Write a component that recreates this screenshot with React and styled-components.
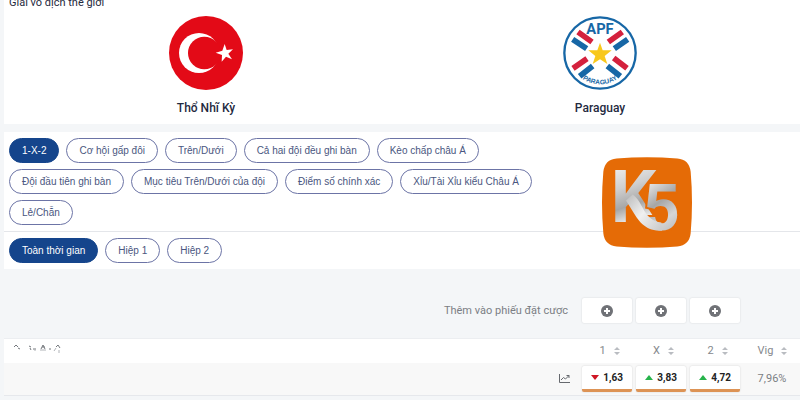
import { useState } from 'react';
import styled, { createGlobalStyle } from 'styled-components';

const GlobalStyle = createGlobalStyle`
  * {
    box-sizing: border-box;
  }

  body {
    margin: 0;
    overflow: hidden;
    background: #f4f6f8;
    color: #1f2a40;
    font-family: Roboto, 'Liberation Sans', sans-serif;
    font-size: 11px;
  }

  button {
    font: inherit;
    color: inherit;
    cursor: pointer;
  }
`;

const Page = styled.main`
  padding-left: 4px;
`;

const MatchCard = styled.section`
  margin-top: -6px;
  background: #ffffff;
`;

const League = styled.div`
  padding: 0 5px;
  line-height: 18px;
`;

const Teams = styled.div`
  display: grid;
  grid-template-columns: 1fr 1fr;
  padding: 4px 3px 8px 5px;
`;

const Team = styled.div`
  display: flex;
  flex-direction: column;
  align-items: center;
  gap: 10px;
`;

const Badge = styled.svg`
  width: 74px;
  height: 74px;
`;

const TeamName = styled.h2`
  margin: 0;
  font-size: 12px;
  line-height: 16px;
  font-weight: 500;
`;

const Markets = styled.section`
  position: relative;
  margin-top: 8px;
  background: #ffffff;
`;

const PillRow = styled.div`
  display: flex;
  flex-wrap: wrap;
  gap: 6px 7px;
  padding: 6px 5px;
  border-top: ${(props) => (props.$divided ? '1px solid #e4e6ea' : 'none')};
`;

const MarketPills = styled(PillRow)`
  width: 72%;
`;

const Pill = styled.button`
  height: 25px;
  padding: 0 12px;
  border: 1px solid ${(props) => (props.$active ? '#15458c' : '#6c74a6')};
  border-radius: 13px;
  background: ${(props) => (props.$active ? '#15458c' : '#ffffff')};
  color: ${(props) => (props.$active ? '#ffffff' : '#4a5680')};
  font-family: 'Liberation Sans', Arial, sans-serif;
  font-size: 10px;
  white-space: nowrap;
`;

const BrandMark = styled.svg`
  position: absolute;
  top: 25px;
  right: 108px;
  width: 90px;
  height: 91px;
`;

const BetSlip = styled.section`
  display: flex;
  justify-content: flex-end;
  align-items: center;
  gap: 4px;
  padding: 29px 60px 15px 0;
`;

const SlipLabel = styled.span`
  margin-right: 10px;
  color: #7b7e84;
  font-size: 11px;
`;

const SlipButton = styled.button`
  display: flex;
  align-items: center;
  justify-content: center;
  width: 50px;
  height: 25px;
  padding: 0;
  border: 0;
  border-radius: 2px;
  background: #ffffff;
  box-shadow: 0 0 2px rgba(0, 0, 0, 0.14);
`;

const OddsTable = styled.table`
  width: 100%;
  table-layout: fixed;
  border-collapse: collapse;
  border-bottom: 1px solid #e6e8ec;
  background: #f8f8f8;
`;

const HeadCell = styled.th`
  width: ${(props) => props.$width};
  height: 24px;
  padding: 0 5px 0 ${(props) => (props.$first ? '10px' : '6px')};
  border-top: 1px solid #eceef1;
  background: #ffffff;
  color: #85888d;
  font-weight: 400;
  text-align: ${(props) => (props.$first ? 'left' : 'center')};
`;

const SortButton = styled.button`
  display: inline-flex;
  align-items: center;
  gap: 8px;
  padding: 0;
  border: 0;
  background: none;
`;

const Cell = styled.td`
  height: 33px;
  padding: 0;
  color: #7b7e84;
  text-align: ${(props) => props.$align || 'left'};
`;

const ChartButton = styled.button`
  padding: 0;
  margin-right: 12px;
  border: 0;
  background: none;
  vertical-align: middle;
`;

const OddButton = styled.button`
  display: flex;
  align-items: center;
  justify-content: space-between;
  width: 50px;
  height: 26px;
  padding: 0 9px;
  border: 0;
  border-bottom: 3px solid #dd9355;
  border-radius: 2px;
  background: #ffffff;
  box-shadow: 0 0 2px rgba(0, 0, 0, 0.16);
  color: #222222;
  font-size: 10px;
  font-weight: 700;
`;

const markets = [
  '1-X-2',
  'Cơ hội gấp đôi',
  'Trên/Dưới',
  'Cả hai đội đều ghi bàn',
  'Kèo chấp châu Á',
  'Đội đầu tiên ghi bàn',
  'Mục tiêu Trên/Dưới của đội',
  'Điểm số chính xác',
  'Xỉu/Tài Xỉu kiểu Châu Á',
  'Lẻ/Chẵn',
];

const periods = ['Toàn thời gian', 'Hiệp 1', 'Hiệp 2'];

const odds = [
  { outcome: '1', value: '1,63', up: false },
  { outcome: 'X', value: '3,83', up: true },
  { outcome: '2', value: '4,72', up: true },
];

function TurkeyFlag() {
  return (
    <Badge viewBox="0 0 222 222" aria-hidden="true">
      <circle cx="111" cy="111" r="111" fill="#e30a17" />
      <circle cx="90" cy="111" r="60" fill="#ffffff" />
      <circle cx="106" cy="111" r="49" fill="#e30a17" />
      <path
        d="M167 84l6 18 19-2-14 13 11 17-18-8-13 15 1-20-19-7 20-6z"
        fill="#ffffff"
      />
    </Badge>
  );
}

function ParaguayBadge() {
  return (
    <Badge viewBox="0 0 222 222" aria-hidden="true">
      <circle cx="111" cy="111" r="107" fill="#ffffff" stroke="#1767a6" strokeWidth="7" />
      <g strokeWidth="17">
        <path d="M45 48l42 30M178 48l-42 30M30 157l42-29M192 157l-40-31" stroke="#d4213d" />
        <path d="M29 70l42 28M194 70l-40 28M50 181l39-31M172 181l-39-31" stroke="#1767a6" />
      </g>
      <path
        d="M111 80l8 23h27l-21 17 8 24-22-14-22 14 8-24-21-17h27z"
        fill="#f8c81c"
      />
      <text
        x="111"
        y="55"
        textAnchor="middle"
        fontFamily="'Liberation Sans Narrow', Roboto, sans-serif"
        fontWeight="700"
        fontSize="44"
        fill="#1767a6"
      >
        APF
      </text>
      <path id="badge-arc" d="M48 180a92 92 0 0 0 126 0" fill="none" />
      <text
        fontFamily="'Liberation Sans Narrow', 'Liberation Sans', sans-serif"
        fontWeight="700"
        fontSize="20"
        fill="#1767a6"
        textAnchor="middle"
      >
        <textPath href="#badge-arc" startOffset="50%">PARAGUAY</textPath>
      </text>
    </Badge>
  );
}

function Brand() {
  return (
    <BrandMark viewBox="0 0 270 272" role="img" aria-label="K5">
      <defs>
        <linearGradient id="steel" gradientUnits="userSpaceOnUse" x1="38" y1="40" x2="90" y2="195">
          <stop offset="0" stopColor="#e9e9e9" />
          <stop offset="0.35" stopColor="#cfcfcf" />
          <stop offset="0.7" stopColor="#a6a6a6" />
          <stop offset="1" stopColor="#efefef" />
        </linearGradient>
        <linearGradient id="five" gradientUnits="userSpaceOnUse" x1="128" y1="80" x2="232" y2="220">
          <stop offset="0" stopColor="#ededed" />
          <stop offset="0.4" stopColor="#a6a6a6" />
          <stop offset="0.7" stopColor="#d6d6d6" />
          <stop offset="1" stopColor="#b8b8b8" />
        </linearGradient>
        <linearGradient id="ribbon" gradientUnits="userSpaceOnUse" x1="70" y1="120" x2="180" y2="210">
          <stop offset="0" stopColor="#bdbdbd" />
          <stop offset="0.5" stopColor="#f0f0f0" />
          <stop offset="1" stopColor="#cccccc" />
        </linearGradient>
      </defs>
      <path
        d="M44 4Q135-4 226 4Q262 7 266 44Q274 136 266 228Q262 264 226 268Q135 276 44 268Q8 264 4 228Q-4 136 4 44Q8 7 44 4z"
        fill="#e56b06"
      />
      <text
        x="26"
        y="193"
        fontFamily="Roboto, 'Liberation Sans', sans-serif"
        fontWeight="700"
        fontSize="215"
        fill="url(#steel)"
      >
        K
        <tspan
          x="122"
          y="219"
          fontSize="194"
          fill="url(#five)"
          stroke="#e56b06"
          strokeWidth="12"
          paintOrder="stroke"
        >
          5
        </tspan>
      </text>
      <path
        d="M72 130L92 112C108 124 112 134 122 152C134 176 150 194 178 196L180 221C132 221 112 196 92 162z"
        fill="url(#ribbon)"
      />
    </BrandMark>
  );
}

function PlusIcon() {
  return (
    <svg width="12" height="12" viewBox="0 0 12 12" aria-hidden="true">
      <circle cx="6" cy="6" r="6" fill="#707277" />
      <path d="M6 3v6M3 6h6" stroke="#ffffff" strokeWidth="2" />
    </svg>
  );
}

function SortIcon() {
  return (
    <svg width="6" height="8" viewBox="0 0 6 8" aria-hidden="true">
      <path d="M3 0l3 3H0zM3 8L0 5h6z" fill="#b9bcc1" />
    </svg>
  );
}

function TrendIcon({ up }) {
  return (
    <svg width="8" height="5" viewBox="0 0 8 5" aria-hidden="true">
      <path d={up ? 'M4 0l4 5H0z' : 'M0 0h8L4 5z'} fill={up ? '#27b34b' : '#cf1624'} />
    </svg>
  );
}

function ChartIcon() {
  return (
    <svg width="11" height="9" viewBox="0 0 11 9" fill="none" stroke="#66696e" aria-hidden="true">
      <path d="M.5 0v8.500H11M2 6l2.500-2.500 2 1.500L10 1.500M7.500 1.500H10V4" />
    </svg>
  );
}

// faded filter label at the left of the odds header
function FadedMarks() {
  return (
    <svg width="48" height="10" viewBox="0 0 48 10" fill="none" stroke="#74787d" aria-hidden="true">
      <path d="M0 3l2-2 2 2M4 4l2 1M15 2l2 1M16 4l1 2M19 5h3M27 5l2-4 2 4M28 3h3M35 5h2M42 3l2-2 2 3" />
      <path d="M20 6h2M26 6h6M40 7l2-3M45 6v3" stroke="#b0b3b8" />
    </svg>
  );
}

function App() {
  const [market, setMarket] = useState(markets[0]);
  const [period, setPeriod] = useState(periods[0]);

  return (
    <Page>
      <GlobalStyle />
      <MatchCard>
        <League>Giải vô dịch thế giới</League>
        <Teams>
          <Team>
            <TurkeyFlag />
            <TeamName>Thổ Nhĩ Kỳ</TeamName>
          </Team>
          <Team>
            <ParaguayBadge />
            <TeamName>Paraguay</TeamName>
          </Team>
        </Teams>
      </MatchCard>

      <Markets>
        <MarketPills>
          {markets.map((name) => (
            <Pill key={name} $active={name === market} onClick={() => setMarket(name)}>
              {name}
            </Pill>
          ))}
        </MarketPills>
        <PillRow $divided>
          {periods.map((name) => (
            <Pill key={name} $active={name === period} onClick={() => setPeriod(name)}>
              {name}
            </Pill>
          ))}
        </PillRow>
        <Brand />
      </Markets>

      <BetSlip>
        <SlipLabel>Thêm vào phiếu đặt cược</SlipLabel>
        {odds.map(({ outcome }) => (
          <SlipButton key={outcome} aria-label={`Thêm ${outcome}`}>
            <PlusIcon />
          </SlipButton>
        ))}
      </BetSlip>

      <OddsTable>
        <thead>
          <tr>
            <HeadCell $first>
              <FadedMarks />
            </HeadCell>
            {odds.map(({ outcome }) => (
              <HeadCell key={outcome} $width="54px">
                <SortButton>
                  {outcome}
                  <SortIcon />
                </SortButton>
              </HeadCell>
            ))}
            <HeadCell $width="56px">
              <SortButton>
                Vig
                <SortIcon />
              </SortButton>
            </HeadCell>
          </tr>
        </thead>
        <tbody>
          <tr>
            <Cell $align="right">
              <ChartButton aria-label="Biểu đồ">
                <ChartIcon />
              </ChartButton>
            </Cell>
            {odds.map(({ outcome, value, up }) => (
              <Cell key={outcome}>
                <OddButton>
                  <TrendIcon up={up} />
                  {value}
                </OddButton>
              </Cell>
            ))}
            <Cell $align="center">7,96%</Cell>
          </tr>
        </tbody>
      </OddsTable>
    </Page>
  );
}

export default App;
